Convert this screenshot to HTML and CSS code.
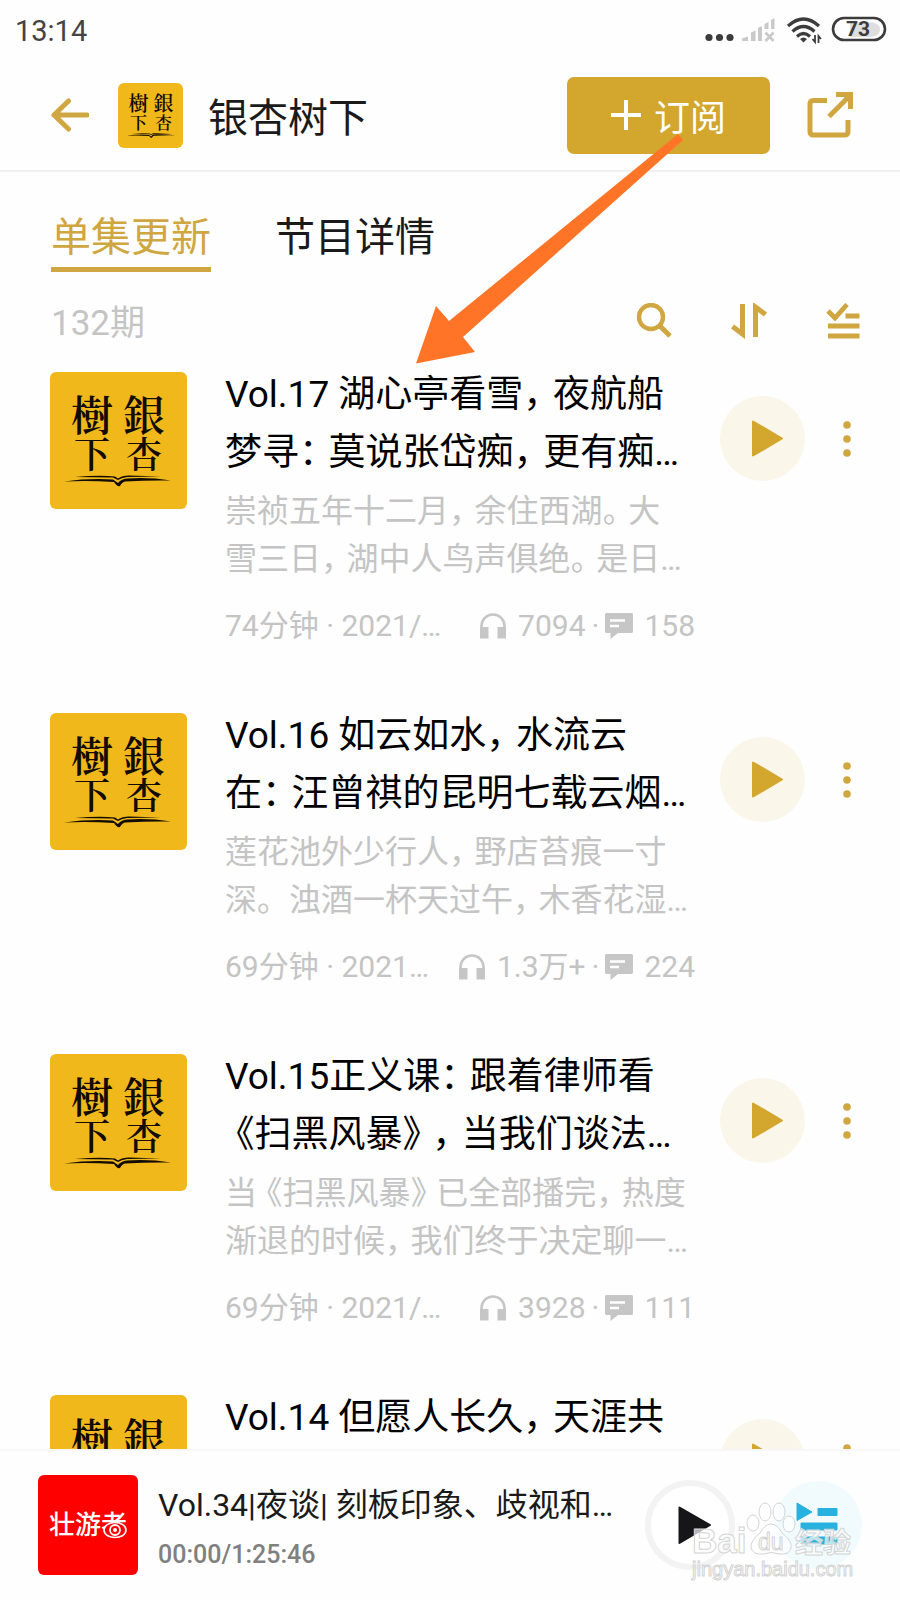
FILE: index.html
```
<!DOCTYPE html>
<html lang="zh-CN">
<head>
<meta charset="utf-8">
<meta name="viewport" content="width=device-width, initial-scale=1">
<title>银杏树下</title>
<link rel="stylesheet" href="styles.css">
</head>
<body>
<svg class="defs" aria-hidden="true">
  <symbol id="book" viewBox="14 102 110 14"><path d="M15 109.500Q40 106 64 107.500L69 111Q72 107 78 106.500Q100 105 122 108.500Q100 108 76 109.500Q73 110 71 114Q68 115 65 110Q40 108.500 15 109.500ZM26 105Q50 103 66 104.500L69 106.500Q73 103.500 80 103.500L112 104.500L78 105Q72 106 69 108L64 105.500Z" fill="#110b02"/></symbol>
  <symbol id="play" viewBox="0 0 85 85"><path d="M33 25.500V59.500L62 42.500Z" fill="#d3a62e" stroke="#d3a62e" stroke-width="2" stroke-linejoin="round"/></symbol>
  <symbol id="more" viewBox="0 0 24 36"><g fill="#d0a640"><circle cx="12" cy="4" r="3.800"/><circle cx="12" cy="18" r="3.800"/><circle cx="12" cy="32" r="3.800"/></g></symbol>
  <symbol id="phones" viewBox="0 0 26 26"><path d="M1.500 24V13a11.500 11.500 0 0 1 23 0V24" fill="none" stroke="#c6c6c6" stroke-width="2.600"/><path d="M0 14H8.500V25.500H0ZM17.500 14H26V25.500H17.500Z" fill="#c6c6c6"/></symbol>
  <symbol id="comment" viewBox="0 0 28 26"><path d="M1 0H27L28 1V19L27 20H13L5.500 26V20H1L0 19V1Z" fill="#c6c6c6"/><path d="M5 7.500H20M5 13H14" stroke="#fff" stroke-width="2.400"/></symbol>
</svg>

<div class="status">
  <span class="clock">13:14</span>
  <svg class="status-icons" viewBox="0 0 188 32" aria-label="信号、无线网络、电量 73%">
    <g fill="#3c3c3c"><circle cx="9" cy="22.500" r="3.600"/><circle cx="19.500" cy="22.500" r="3.600"/><circle cx="30" cy="22.500" r="3.600"/></g>
    <path d="M42 26V23.500L48 21.500V26ZM51 26V17.500L55.500 15.500V26ZM58 26V13L62 11V26ZM64.500 14V9L68.500 7V14ZM71 14V5L74.500 3V14Z" fill="#c9c9c9"/>
    <path d="M65.500 17.500L73.500 26M73.500 17.500L65.500 26" stroke="#c9c9c9" stroke-width="2.600"/>
    <g fill="none" stroke="#3c3c3c" stroke-width="3.200"><path d="M88 11Q103.500 -3 119 11"/><path d="M92.500 16.500Q103.500 6.500 114.500 16.500"/><path d="M97 21.500Q103.500 15.500 110 21.500"/></g>
    <path d="M100 24Q103.500 21 107 24L103.500 27.500Z" fill="#3c3c3c"/>
    <path d="M115 20V27L112.500 24M118.500 28V21L121 24" fill="none" stroke="#3c3c3c" stroke-width="1.800"/>
    <path d="M150 7H167Q180 7 180 14.500T167 22H150Z" fill="#dedede"/>
    <rect x="133" y="3" width="52" height="22" rx="11" fill="none" stroke="#3c3c3c" stroke-width="2.600"/>
    <text class="battery" x="158" y="21" text-anchor="middle">73</text>
  </svg>
</div>

<header class="header">
  <button class="icon-btn back" aria-label="返回"><svg viewBox="0 0 38 34"><path d="M36 17H3M17.500 3L3 17L17.500 31" fill="none" stroke="#d0a640" stroke-width="5" stroke-linecap="round" stroke-linejoin="round"/></svg></button>
  <div class="cover small"><span>樹</span><span>銀</span><span class="low">下</span><span class="low">杏</span><svg><use href="#book"/></svg></div>
  <h1>银杏树下</h1>
  <button class="subscribe"><svg viewBox="0 0 30 30" aria-hidden="true"><path d="M15 0V30M0 15H30" stroke="#fff" stroke-width="4"/></svg>订阅</button>
  <button class="icon-btn share" aria-label="分享"><svg viewBox="0 0 46 46"><path d="M20 8.500H6.500Q3 8.500 3 12V39.500Q3 43 6.500 43H37.500Q41 43 41 39.500V28" fill="none" stroke="#d0a640" stroke-width="5"/><path d="M22 24.500L42 4.500" stroke="#d0a640" stroke-width="5"/><path d="M29 0H46V17H41V9L37 5H29Z" fill="#d0a640"/></svg></button>
</header>

<nav class="tabs">
  <a class="tab active" href="#episodes">单集更新</a>
  <a class="tab" href="#detail">节目详情</a>
</nav>

<div class="tools">
  <span class="count">132期</span>
  <button class="icon-btn tool" aria-label="搜索"><svg viewBox="0 0 36 36"><circle cx="15" cy="14" r="12" fill="none" stroke="#d0a640" stroke-width="4.400"/><path d="M23.500 22.500L34 33" stroke="#d0a640" stroke-width="5"/></svg></button>
  <button class="icon-btn tool" aria-label="排序"><svg viewBox="0 0 36 36"><path d="M11.500 1V31L1.500 23.500M24.500 34V4L34.500 11.500" fill="none" stroke="#d0a640" stroke-width="5"/></svg></button>
  <button class="icon-btn tool" aria-label="批量选择"><svg viewBox="0 0 36 36"><path d="M2 8L9 15L21 1.500M19.500 13H33.500M2 23H33.500M2 33H33.500" fill="none" stroke="#d0a640" stroke-width="4.800"/></svg></button>
</div>

<main class="list" id="episodes">
  <article class="item">
    <div class="cover"><span>樹</span><span>銀</span><span class="low">下</span><span class="low">杏</span><svg><use href="#book"/></svg></div>
    <div class="info">
      <h2>Vol.17 湖心亭看雪<span class="p">，</span>夜航船<br>梦寻<span class="p">：</span>莫说张岱痴<span class="p">，</span>更有痴…</h2>
      <p class="desc">崇祯五年十二月<span class="p">，</span>余住西湖<span class="p">。</span>大<br>雪三日<span class="p">，</span>湖中人鸟声俱绝<span class="p">。</span>是日…</p>
      <div class="meta"><span class="when">74分钟 · 2021/…</span><svg class="phones"><use href="#phones"/></svg><span>7094</span><span class="dot">·</span><svg class="comment"><use href="#comment"/></svg><span>158</span></div>
    </div>
    <button class="play" aria-label="播放"><svg><use href="#play"/></svg></button>
    <button class="icon-btn more" aria-label="更多"><svg><use href="#more"/></svg></button>
  </article>
  <article class="item">
    <div class="cover"><span>樹</span><span>銀</span><span class="low">下</span><span class="low">杏</span><svg><use href="#book"/></svg></div>
    <div class="info">
      <h2>Vol.16 如云如水<span class="p">，</span>水流云<br>在<span class="p">：</span>汪曾祺的昆明七载云烟…</h2>
      <p class="desc">莲花池外少行人<span class="p">，</span>野店苔痕一寸<br>深。浊酒一杯天过午<span class="p">，</span>木香花湿…</p>
      <div class="meta"><span class="when">69分钟 · 2021…</span><svg class="phones"><use href="#phones"/></svg><span>1.3万+</span><span class="dot">·</span><svg class="comment"><use href="#comment"/></svg><span>224</span></div>
    </div>
    <button class="play" aria-label="播放"><svg><use href="#play"/></svg></button>
    <button class="icon-btn more" aria-label="更多"><svg><use href="#more"/></svg></button>
  </article>
  <article class="item">
    <div class="cover"><span>樹</span><span>銀</span><span class="low">下</span><span class="low">杏</span><svg><use href="#book"/></svg></div>
    <div class="info">
      <h2>Vol.15正义课<span class="p">：</span>跟着律师看<br><span class="p open">《</span>扫黑风暴<span class="p">》</span><span class="p">，</span>当我们谈法…</h2>
      <p class="desc">当<span class="p open">《</span>扫黑风暴<span class="p">》</span>已全部播完<span class="p">，</span>热度<br>渐退的时候<span class="p">，</span>我们终于决定聊一…</p>
      <div class="meta"><span class="when">69分钟 · 2021/…</span><svg class="phones"><use href="#phones"/></svg><span>3928</span><span class="dot">·</span><svg class="comment"><use href="#comment"/></svg><span>111</span></div>
    </div>
    <button class="play" aria-label="播放"><svg><use href="#play"/></svg></button>
    <button class="icon-btn more" aria-label="更多"><svg><use href="#more"/></svg></button>
  </article>
  <article class="item">
    <div class="cover"><span>樹</span><span>銀</span></div>
    <div class="info">
      <h2>Vol.14 但愿人长久<span class="p">，</span>天涯共</h2>
    </div>
    <button class="play" aria-label="播放"><svg><use href="#play"/></svg></button>
    <button class="icon-btn more" aria-label="更多"><svg><use href="#more"/></svg></button>
  </article>
</main>

<footer class="player">
  <svg class="now-cover" viewBox="0 0 100 100" role="img" aria-label="壮游者">
    <rect width="100" height="100" fill="#fe0000"/>
    <text class="brand" x="11" y="59">壮游者</text>
    <ellipse cx="77" cy="55" rx="11" ry="7.500" fill="#fe0000" stroke="#fff" stroke-width="1.600"/>
    <circle cx="77" cy="55" r="5" fill="none" stroke="#fff" stroke-width="1.800"/><circle cx="77" cy="55" r="2" fill="#fff"/>
  </svg>
  <div class="now">
    <div class="now-title">Vol.34|夜谈| 刻板印象、歧视和…</div>
    <div class="now-time">00:00/1:25:46</div>
  </div>
  <button class="now-play" aria-label="播放"><svg viewBox="0 0 90 90"><circle cx="45" cy="45" r="42" fill="#fff" stroke="#f3f3f3" stroke-width="6"/><path d="M34.500 27.500V63L65 45Z" fill="#161618" stroke="#161618" stroke-width="2" stroke-linejoin="round"/></svg></button>
  <button class="queue" aria-label="播放列表"><svg viewBox="0 0 88 88"><circle cx="44" cy="44" r="44" fill="#f1fbfe"/><path d="M23 22L38 31L23 39.500ZM44 27.500H63V34.500H44ZM27 42H63V49H27ZM27 56H63V63H27Z" fill="#27b1df" stroke="#27b1df" stroke-linejoin="round"/></svg></button>
  <svg class="watermark" viewBox="0 0 170 96" aria-hidden="true">
    <g class="mark">
      <text x="4" y="57" font-size="35" font-weight="700">Bai</text>
      <ellipse cx="65" cy="27" rx="6" ry="8"/><ellipse cx="77" cy="16" rx="6" ry="9"/><ellipse cx="91" cy="16" rx="6" ry="9"/><ellipse cx="101" cy="28" rx="6" ry="8"/>
      <path d="M83 28Q89 28 94 37Q105 46 103 52Q101 59 92 58Q83 55 75 58Q65 59 63 52Q62 45 72 37Q77 28 83 28Z"/>
      <text x="70" y="54" font-size="23">du</text>
      <text x="107" y="57" font-size="28" font-weight="700">经验</text>
      <text x="4" y="80" font-size="20">jingyan.baidu.com</text>
    </g>
  </svg>
</footer>

<svg class="pointer" viewBox="0 0 268 230" aria-hidden="true"><path d="M262 0L267 6L47 203L59 218L0 229.500L20 172L33 187Z" fill="#ff7426"/></svg>
</body>
</html>
```
FILE: styles.css
```
* { box-sizing: border-box; }

body {
  position: relative;
  display: flex;
  flex-direction: column;
  height: 100vh;
  margin: 0;
  overflow: hidden;
  background: #fefefe;
  color: #1a1a1a;
  font-family: Roboto, "Noto Sans CJK SC", sans-serif;
}

button {
  padding: 0;
  border: 0;
  background: none;
  font: inherit;
  color: inherit;
}

svg { display: block; }
h1, h2, p { margin: 0; font-weight: 400; }
.defs { position: absolute; width: 0; height: 0; }
.icon-btn { flex: none; }
.icon-btn svg { width: 100%; height: 100%; }

.cover {
  display: grid;
  grid-template-columns: 52px 52px;
  align-content: start;
  justify-items: center;
  width: 137px;
  height: 137px;
  margin-top: 6px;
  padding: 22px 0 0 16px;
  border-radius: 6px;
  background: #f1b81b;
  color: #110b02;
  font-family: "Noto Serif CJK TC", "Noto Sans CJK TC", serif;
  font-size: 42px;
  font-weight: 600;
  line-height: 39px;
}
.cover .low { font-size: 36px; }
.cover svg {
  grid-column: 1 / -1;
  width: 110px;
  height: 14px;
  margin-top: 2px;
}
.cover.small {
  grid-template-columns: 25px 25px;
  width: 65px;
  height: 65px;
  margin: 0 0 0 29px;
  padding: 10px 0 0 8px;
  font-size: 20px;
  line-height: 19px;
}
.cover.small .low { font-size: 17px; }
.cover.small svg { width: 50px; height: 7px; margin-top: 1px; }

.status {
  display: flex;
  flex: none;
  align-items: center;
  justify-content: space-between;
  height: 60px;
  padding: 2px 12px 0 15px;
  color: #444;
}
.clock { font-size: 29px; }
.status-icons { width: 188px; height: 32px; }
.battery { fill: #3c3c3c; font-size: 21px; font-weight: 700; }

.header {
  display: flex;
  flex: none;
  align-items: center;
  height: 112px;
  padding: 0 47px 0 51px;
  border-bottom: 2px solid #f1f1f1;
}
.back { width: 38px; height: 34px; }
.header h1 {
  flex: 1;
  margin-left: 25px;
  padding-top: 7px;
  font-size: 40px;
  line-height: 56px;
  white-space: nowrap;
}
.subscribe {
  display: flex;
  align-items: center;
  justify-content: center;
  gap: 13px;
  width: 203px;
  height: 77px;
  border-radius: 7px;
  background: #d3a62e;
  color: #fff;
  font-size: 36px;
}
.subscribe svg { width: 30px; height: 30px; }
.share { width: 46px; height: 46px; margin-left: 37px; }

.tabs {
  display: flex;
  flex: none;
  gap: 64px;
  padding: 37px 51px 0;
}
.tab {
  padding-bottom: 1px;
  border-bottom: 5px solid transparent;
  color: #1a1a1a;
  font-size: 40px;
  line-height: 57px;
  text-decoration: none;
}
.tab.active { border-color: #d0a640; color: #d0a640; }

.tools {
  display: flex;
  flex: none;
  align-items: center;
  gap: 59px;
  height: 94px;
  padding: 4px 38px 0 51px;
}
.count {
  flex: 1;
  padding-top: 6px;
  color: #c4c4c4;
  font-size: 35px;
  line-height: 40px;
}
.tool { width: 36px; height: 36px; }

.list { flex: 1; min-height: 0; overflow: hidden; }
.item {
  display: grid;
  grid-template-columns: 137px 1fr 85px 55px;
  align-items: start;
  padding: 0 40px 61px 50px;
}
.info { padding: 0 25px 0 38px; white-space: nowrap; }
.info h2 { color: #000; font-size: 37px; line-height: 58px; }
.desc { margin-top: 5px; color: #c4c4c4; font-size: 32px; line-height: 48px; }
.p { display: inline-flex; width: 0.8em; }
.p.open { justify-content: flex-end; }
.meta {
  display: flex;
  align-items: center;
  margin-top: 23px;
  color: #c4c4c4;
  font-size: 30px;
  line-height: 40px;
}
.when { flex: 1; }
.phones { width: 26px; height: 26px; margin-right: 12px; }
.dot { margin: 0 6px; }
.comment { width: 28px; height: 26px; margin-right: 11px; }
.play {
  width: 85px;
  height: 85px;
  margin-top: 30px;
  border-radius: 50%;
  background: #faf6ea;
}
.play svg { width: 85px; height: 85px; }
.more { width: 24px; height: 36px; margin: 55px 0 0 30px; }

.player {
  position: relative;
  display: flex;
  flex: none;
  align-items: center;
  height: 151px;
  padding: 0 38px 2px;
  border-top: 2px solid #f7f7f7;
  background: #fefefe;
}
.now-cover { width: 100px; height: 100px; border-radius: 6px; }
.brand { fill: #fff; font-size: 26px; font-weight: 500; }
.now { flex: 1; margin-left: 20px; padding-top: 8px; white-space: nowrap; }
.now-title { font-size: 32px; line-height: 52px; }
.now-time { color: #808080; font-size: 25px; font-weight: 500; line-height: 48px; }
.now-play, .now-play svg { width: 90px; height: 90px; }
.queue { margin-left: 39px; }
.queue svg { width: 88px; height: 88px; }
.watermark {
  position: absolute;
  right: 42px;
  bottom: 8px;
  width: 170px;
  height: 96px;
}
.mark {
  fill: #fff;
  fill-opacity: 0.7;
  stroke: #d4d4d4;
  stroke-width: 1;
  font-family: "Liberation Sans", "Noto Sans CJK SC", sans-serif;
}

.pointer {
  position: absolute;
  top: 134px;
  left: 416px;
  width: 268px;
  height: 230px;
}
```
